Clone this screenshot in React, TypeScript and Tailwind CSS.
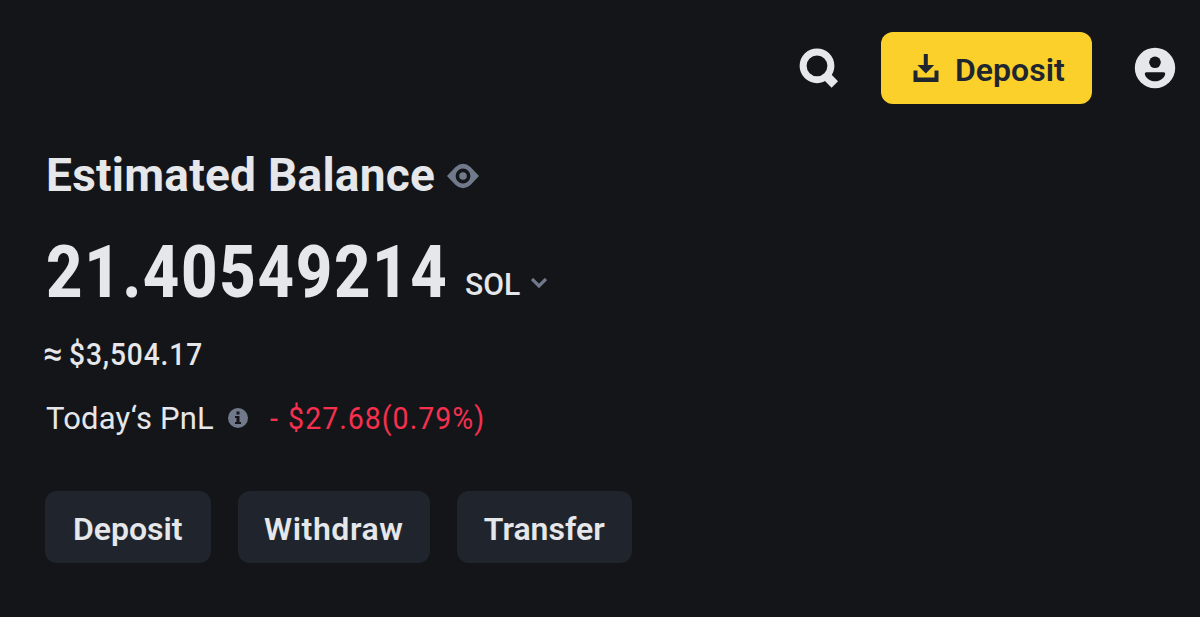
import type { ReactNode } from 'react';

const balance = {
  amount: '21.40549214',
  currency: 'SOL',
  fiat: '$3,504.17',
  pnl: '$27.68(0.79%)',
};

function SearchIcon() {
  return (
    <svg width="40" height="42" viewBox="0 0 40 42" fill="none" stroke="#e6e7ea">
      <circle cx="18" cy="18.800" r="13.900" strokeWidth="7" />
      <path d="M27 28.500l8.800 9" strokeWidth="9" />
    </svg>
  );
}

function DownloadIcon() {
  return (
    <svg width="26" height="30" viewBox="0 0 26 30" fill="#202630">
      <path d="M10.800 1h4v11h6.400L12.800 20.500 4.400 12h6.400z" />
      <path d="M0.500 17.500h4v7h17v-7h4V29h-25z" />
    </svg>
  );
}

function UserIcon() {
  return (
    <svg width="42" height="42" viewBox="0 0 42 42">
      <circle cx="21" cy="21" r="20.200" fill="#e6e7ea" />
      <circle cx="21" cy="15.300" r="5.800" fill="#141519" />
      <path d="M12.500 25.200h17q2 0 1.700 1.800c-.7 3.700-4.900 7.300-10.200 7.300s-9.500-3.600-10.200-7.300q-.3-1.800 1.700-1.800z" fill="#141519" />
    </svg>
  );
}

function EyeIcon() {
  return (
    <svg width="32" height="26" viewBox="0 0 32 26">
      <path d="M0 13L8.500 4Q16-2.500 23.500 4L32 13l-8.500 9Q16 28.500 8.500 22z" fill="#707a8a" />
      <circle cx="16" cy="13" r="5.600" fill="#707a8a" stroke="#141519" strokeWidth="3.600" />
    </svg>
  );
}

function InfoIcon() {
  return (
    <svg width="20" height="20" viewBox="0 0 20 20">
      <circle cx="10" cy="10" r="10" fill="#707a8a" />
      <path d="M8.500 3.500h3v3h-3zM7 8h4.500v6H13v2H7v-2h1.500v-4H7z" fill="#141519" />
    </svg>
  );
}

function ActionButton({ className, children }: { className: string; children: ReactNode }) {
  return (
    <button className={`flex h-[72px] items-center justify-center rounded-xl bg-[#20252d] pt-1 text-[32px] leading-none font-semibold ${className}`}>
      {children}
    </button>
  );
}

export default function App() {
  return (
    <div className="h-[617px] w-[1200px] overflow-hidden bg-[#141519] font-['Roboto',sans-serif] text-[#e6e7ea]">
      <header className="flex h-[136px] items-center justify-end pr-6">
        <button className="mr-[42px]">
          <SearchIcon />
        </button>
        <button className="mr-[42px] flex h-[72px] w-[211px] items-center gap-4 rounded-xl bg-[#fcd02b] pl-8 text-[32px] leading-none font-semibold text-[#202630]">
          <DownloadIcon />
          <span className="pt-[4px] whitespace-nowrap">Deposit</span>
        </button>
        <button>
          <UserIcon />
        </button>
      </header>

      <main className="pl-[45px]">
        <div className="flex h-[80px] items-center">
          <h1 className="w-[402px] pb-[2px] pl-px text-[46px] leading-none font-bold tracking-[0.25px] whitespace-nowrap">
            Estimated Balance
          </h1>
          <EyeIcon />
        </div>

        <div className="flex h-[112px] items-center">
          <div className="w-[420px] pt-[2px] pl-px">
            <span className="inline-block origin-left scale-x-[0.88] text-[72px] leading-none font-extrabold tracking-[1.900px] whitespace-nowrap">
              {balance.amount}
            </span>
          </div>
          <button className="flex items-center pt-[24px] text-[32px] leading-none font-medium">
            <span className="w-[66px] origin-left scale-x-[0.94] text-left">{balance.currency}</span>
            <svg width="16" height="12" viewBox="0 0 16 12" fill="none" stroke="#707a8a" strokeWidth="3.200">
              <path d="M1 1l7 7 7-7" />
            </svg>
          </button>
        </div>

        <div className="flex h-[52px] items-center text-[32px] leading-none font-medium">
          <span className="-ml-[2px] w-[26px] pb-[3px] text-[34px]">≈</span>
          <span className="inline-block origin-left scale-x-[0.88] pb-px tracking-[1px]">{balance.fiat}</span>
        </div>

        <div className="flex h-[76px] items-center text-[31px] leading-none">
          <span className="w-[183px] pl-px tracking-[0.2px] whitespace-nowrap">Today‘s PnL</span>
          <InfoIcon />
          <span className="ml-[22px] flex origin-left scale-x-[0.92] gap-[10px] tracking-[1.100px] whitespace-nowrap text-[#f6304f]">
            <span>-</span>
            <span>{balance.pnl}</span>
          </span>
        </div>

        <div className="mt-[35px] flex gap-[27px]">
          <ActionButton className="w-[165.500px]">Deposit</ActionButton>
          <ActionButton className="w-[192.500px] tracking-[0.600px]">Withdraw</ActionButton>
          <ActionButton className="w-[174.500px]">Transfer</ActionButton>
        </div>
      </main>
    </div>
  );
}
